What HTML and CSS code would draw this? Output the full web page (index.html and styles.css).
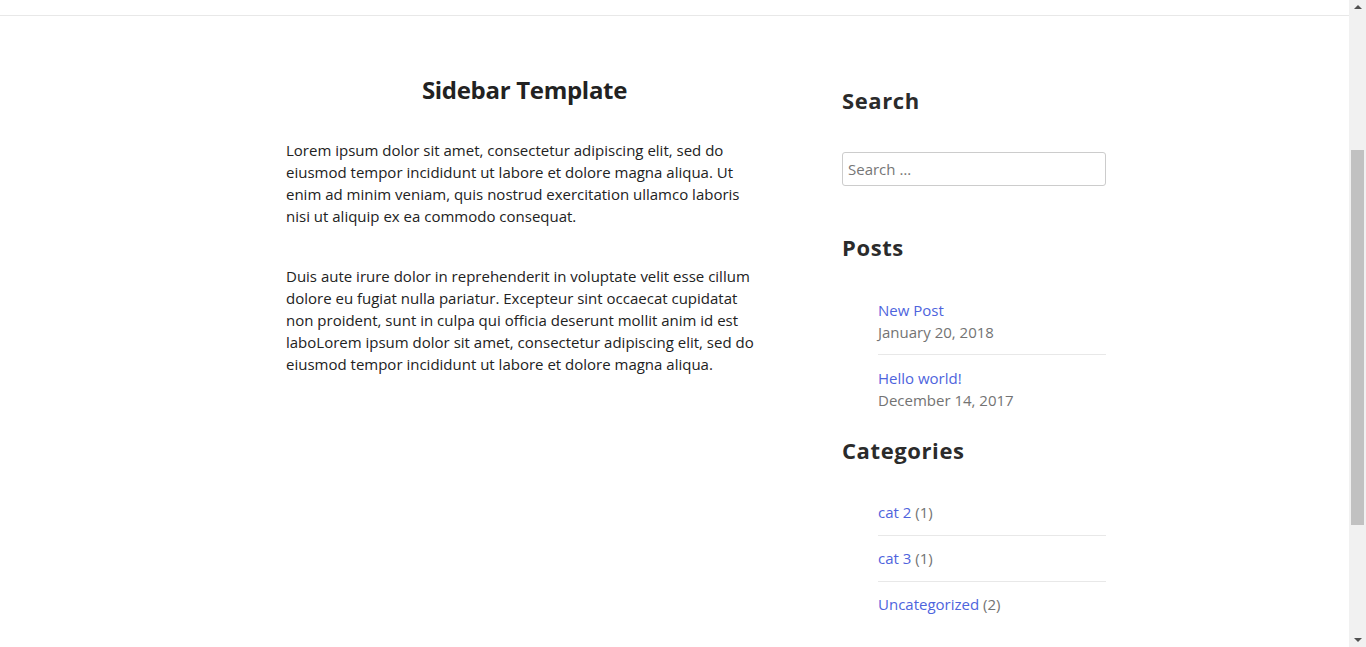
FILE: index.html
```html
<!DOCTYPE html>
<html lang="en">
<head>
<meta charset="utf-8">
<title>Sidebar Template</title>
<link rel="stylesheet" href="styles.css">
</head>
<body>
<header class="site-header"></header>
<div class="site-content">
  <main class="content-area">
    <h1 class="entry-title">Sidebar Template</h1>
    <p class="para">Lorem ipsum dolor sit amet, consectetur adipiscing elit, sed do eiusmod tempor incididunt ut labore et dolore magna aliqua. Ut enim ad minim veniam, quis nostrud exercitation ullamco laboris nisi ut aliquip ex ea commodo consequat.</p>
    <p class="para">Duis aute irure dolor in reprehenderit in voluptate velit esse cillum dolore eu fugiat nulla pariatur. Excepteur sint occaecat cupidatat non proident, sunt in culpa qui officia deserunt mollit anim id est laboLorem ipsum dolor sit amet, consectetur adipiscing elit, sed do eiusmod tempor incididunt ut labore et dolore magna aliqua.</p>
  </main>
  <aside class="sidebar">
    <section class="widget widget-search">
      <h2 class="widget-title">Search</h2>
      <form class="search-form">
        <input class="search-field" type="search" placeholder="Search …">
      </form>
    </section>
    <section class="widget widget-posts">
      <h2 class="widget-title">Posts</h2>
      <ul class="widget-list">
        <li class="widget-item"><a class="widget-link" href="#">New Post</a><span class="post-date">January 20, 2018</span></li>
        <li class="widget-item"><a class="widget-link" href="#">Hello world!</a><span class="post-date">December 14, 2017</span></li>
      </ul>
    </section>
    <section class="widget widget-cats">
      <h2 class="widget-title">Categories</h2>
      <ul class="widget-list">
        <li class="widget-item"><a class="widget-link" href="#">cat 2</a> <span class="count">(1)</span></li>
        <li class="widget-item"><a class="widget-link" href="#">cat 3</a> <span class="count">(1)</span></li>
        <li class="widget-item"><a class="widget-link" href="#">Uncategorized</a> <span class="count">(2)</span></li>
      </ul>
    </section>
  </aside>
</div>
<div class="fake-scrollbar" aria-hidden="true">
  <span class="sb-arrow sb-up"></span>
  <span class="sb-thumb"></span>
  <span class="sb-arrow sb-down"></span>
</div>
<script src="script.js"></script>
</body>
</html>
```

FILE: styles.css
```css
html {
  overflow-y: scroll;
  scroll-behavior: auto;
}
body {
  margin: 0;
  background: #fff;
  color: #222;
  font-family: "Open Sans", "DejaVu Sans", sans-serif;
  font-size: 15px;
  line-height: 22px;
}
.site-header {
  height: 244px;
  border-bottom: 1px solid #e8e8e8;
}
.site-content {
  display: flex;
  align-items: flex-start;
  gap: 79px;
  padding: 58px 0 201px 286px;
}
.content-area {
  width: 477px;
  flex: none;
}
.entry-title {
  margin: 0 0 33px;
  font-size: 24px;
  line-height: 32px;
  font-weight: 700;
  text-align: center;
  color: #222;
  letter-spacing: -0.3px;
}
.para {
  margin: 0 0 38px;
}
.sidebar {
  width: 264px;
  flex: none;
  margin-top: 11px;
}
.widget-title {
  margin: 0;
  font-size: 22px;
  line-height: 30px;
  font-weight: 700;
  color: #2b2b2b;
  letter-spacing: 0.6px;
}
.search-form {
  margin: 37px 0 0;
}
.search-field {
  display: block;
  box-sizing: border-box;
  width: 264px;
  height: 34px;
  margin: 0;
  padding: 0 5px;
  border: 1px solid #ccc;
  border-radius: 3px;
  font-family: inherit;
  font-size: 15px;
  color: #222;
  background: #fff;
  outline: none;
}
.search-field::placeholder {
  color: #767676;
}
.widget-posts {
  margin-top: 46px;
}
.widget-posts .widget-list {
  margin-top: 26px;
}
.widget-posts .widget-item {
  padding-bottom: 11px;
}
.widget-posts .widget-item + .widget-item {
  padding-top: 12px;
}
.widget-cats {
  margin-top: 13px;
}
.widget-list {
  list-style: none;
  margin: 25px 0 0;
  padding: 0 0 0 36px;
}
.widget-item {
  padding: 11px 0 12px;
  border-bottom: 1px solid #e8e8e8;
}
.widget-item:last-child {
  border-bottom: none;
}
.widget-link {
  color: #4e64dd;
  text-decoration: none;
}
.post-date {
  display: block;
  color: #737373;
}
.count {
  color: #737373;
}
.fake-scrollbar {
  position: fixed;
  top: 0;
  right: 0;
  width: 17px;
  height: 100%;
  background: #f1f1f1;
}
.sb-thumb {
  position: absolute;
  left: 2px;
  right: 2px;
  top: 150px;
  height: 375px;
  background: #c1c1c1;
}
.sb-arrow {
  position: absolute;
  left: 5px;
  width: 0;
  height: 0;
  border-left: 4px solid transparent;
  border-right: 4px solid transparent;
}
.sb-up {
  top: 5px;
  border-bottom: 4px solid #505050;
}
.sb-down {
  bottom: 5px;
  border-top: 4px solid #505050;
}
```

FILE: script.js
```js
function goScroll() { window.scrollTo(0, 229); }
goScroll();
document.addEventListener('DOMContentLoaded', goScroll);
window.addEventListener('load', goScroll);
```
